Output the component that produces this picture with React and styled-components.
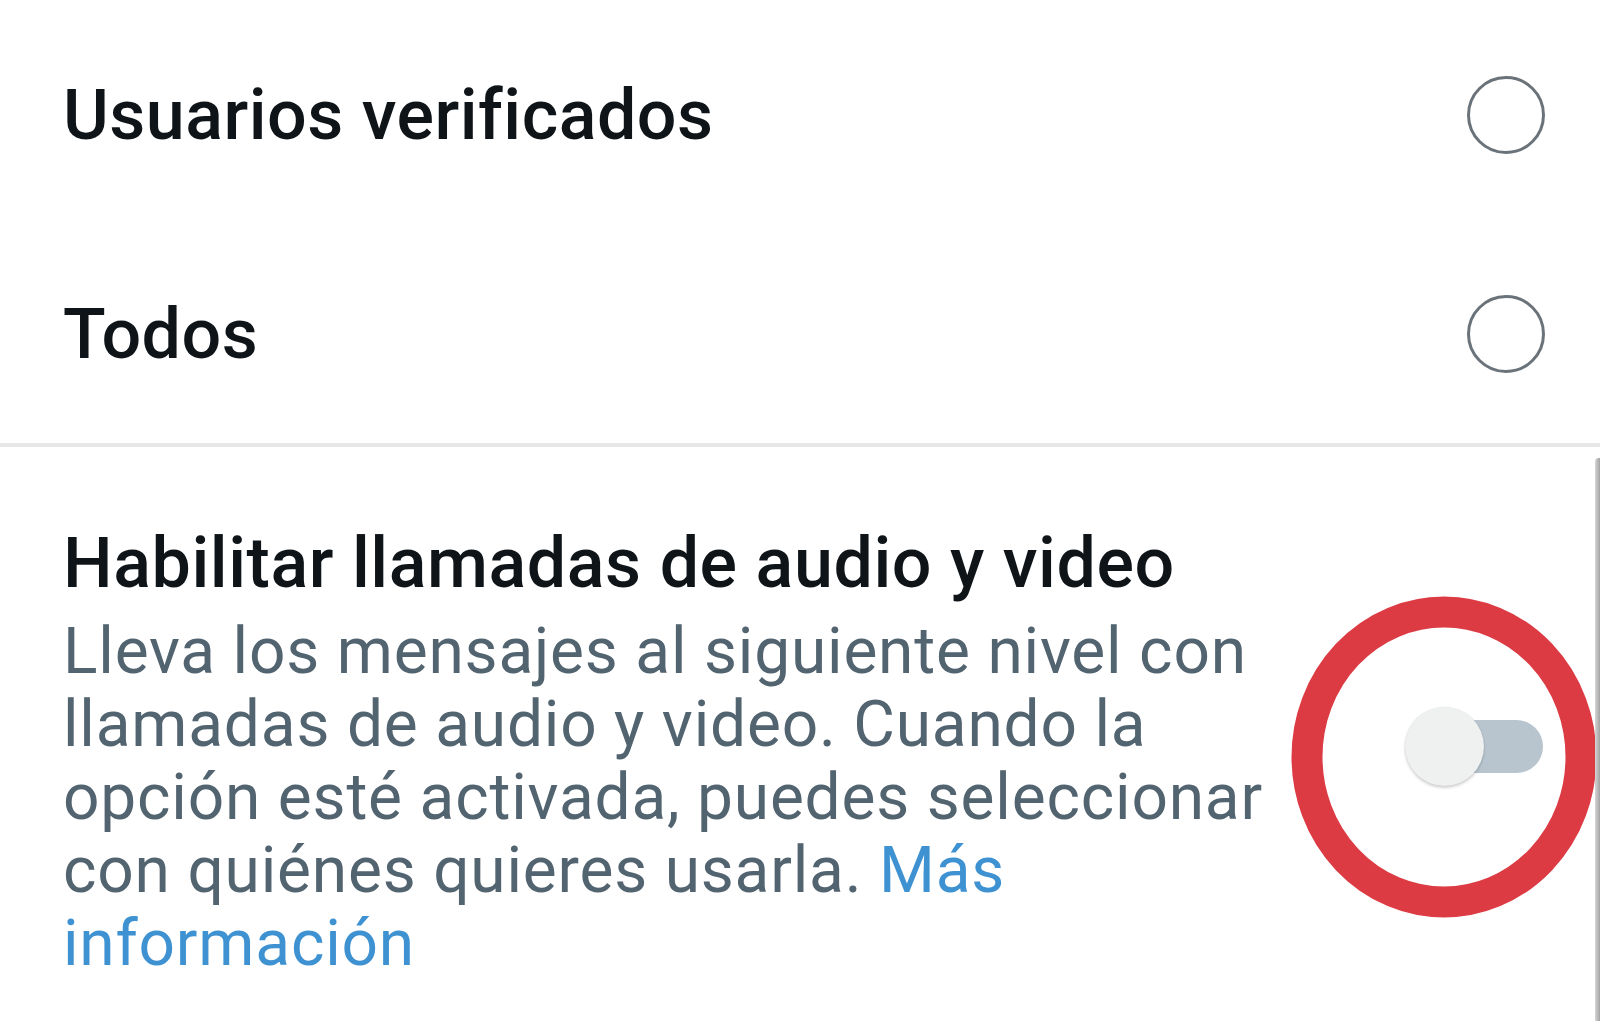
import React from 'react'
import styled, { createGlobalStyle } from 'styled-components'

const GlobalStyle = createGlobalStyle`
    html, body {
        margin: 0;
        padding: 0;
        background: #ffffff;
    }
    body {
        font-family: Roboto, "Noto Sans", "Liberation Sans", sans-serif;
        -webkit-font-smoothing: antialiased;
    }
`

const audience = [
    { id: 'verified', label: 'Usuarios verificados' },
    { id: 'all', label: 'Todos' },
]

const Page = styled.div`
    width: 1600px;
    min-height: 1021px;
    overflow: hidden;
    background: #fff;
`

const OptionList = styled.ul`
    list-style: none;
    margin: 0;
    padding: 5px 0 0;
    border-bottom: 4px solid #e7e7e7;
`

const OptionRow = styled.li`
    height: 219px;
    display: flex;
    align-items: center;
    justify-content: space-between;
    padding: 0 55px 0 63px;
`

const OptionLabel = styled.span`
    font-size: 70px;
    font-weight: 500;
    line-height: 1;
    color: #0f1419;
    letter-spacing: 0.5px;
`

const Radio = styled.span`
    box-sizing: border-box;
    width: 78px;
    height: 78px;
    border-radius: 50%;
    border: 3px solid #6b737a;
    background: ${({ checked }) => (checked ? '#1d9bf0' : 'transparent')};
`

const Setting = styled.section`
    position: relative;
    display: flex;
    align-items: center;
    justify-content: space-between;
    padding: 76px 57px 41px 63px;

    &::after {
        content: '';
        position: absolute;
        right: 0;
        top: 11px;
        bottom: 0;
        width: 5px;
        border-radius: 4px 0 0 0;
        background: linear-gradient(to right, #d6d6d6, #a2a2a2);
    }
`

const SettingText = styled.div`
    display: flex;
    flex-direction: column;
    gap: 12px;
`

const SettingTitle = styled.h2`
    margin: 0;
    font-size: 70px;
    font-weight: 500;
    line-height: 80px;
    color: #0f1419;
    letter-spacing: 0.55px;
`

const SettingBody = styled.p`
    margin: 0;
    font-size: 64px;
    font-weight: 400;
    line-height: 73px;
    color: #536471;
    letter-spacing: 0.8px;
    white-space: nowrap;
`

const MoreLink = styled.a`
    color: #3f92d2;
    text-decoration: none;
`

const Switch = styled.button`
    position: relative;
    flex: none;
    width: 138px;
    height: 79px;
    margin-bottom: 10px;
    padding: 0;
    border: none;
    background: none;
    cursor: pointer;
`

const Track = styled.span`
    position: absolute;
    right: 0;
    top: 13px;
    width: 123px;
    height: 53px;
    border-radius: 27px;
    background: ${({ on }) => (on ? '#8ecdf8' : '#b8c5cf')};
`

const Knob = styled.span`
    position: absolute;
    top: 0;
    left: ${({ on }) => (on ? '59px' : '0')};
    width: 79px;
    height: 79px;
    border-radius: 50%;
    background: ${({ on }) => (on ? '#1d9bf0' : '#eff1f1')};
    box-shadow: 0 2px 3px rgba(0, 0, 0, 0.18), 0 0 1px rgba(0, 0, 0, 0.12);
`

// red marker ring drawn around the switch
const Highlight = styled.svg`
    position: absolute;
    left: -114px;
    top: -111px;
    width: 306px;
    height: 322px;
    pointer-events: none;
    overflow: visible;
`

function Toggle({ on, onChange }) {
    return (
        <Switch role="switch" aria-checked={on} onClick={() => onChange(!on)}>
            <Track on={on} />
            <Knob on={on} />
            <Highlight viewBox="0 0 306 322">
                <ellipse cx="153" cy="161" rx="137" ry="145" fill="none" stroke="#dc3b44" strokeWidth="31" />
            </Highlight>
        </Switch>
    )
}

function App() {
    const [selected, setSelected] = React.useState(null)
    const [calls, setCalls] = React.useState(false)

    return (
        <Page>
            <GlobalStyle />
            <OptionList>
                {audience.map((item) => (
                    <OptionRow key={item.id} onClick={() => setSelected(item.id)}>
                        <OptionLabel>{item.label}</OptionLabel>
                        <Radio checked={selected === item.id} />
                    </OptionRow>
                ))}
            </OptionList>
            <Setting>
                <SettingText>
                    <SettingTitle>Habilitar llamadas de audio y video</SettingTitle>
                    <SettingBody>
                        Lleva los mensajes al siguiente nivel con<br />
                        llamadas de audio y video. Cuando la<br />
                        opción esté activada, puedes seleccionar<br />
                        con quiénes quieres usarla. <MoreLink href="#">Más<br />
                        información</MoreLink>
                    </SettingBody>
                </SettingText>
                <Toggle on={calls} onChange={setCalls} />
            </Setting>
        </Page>
    )
}

export default App
